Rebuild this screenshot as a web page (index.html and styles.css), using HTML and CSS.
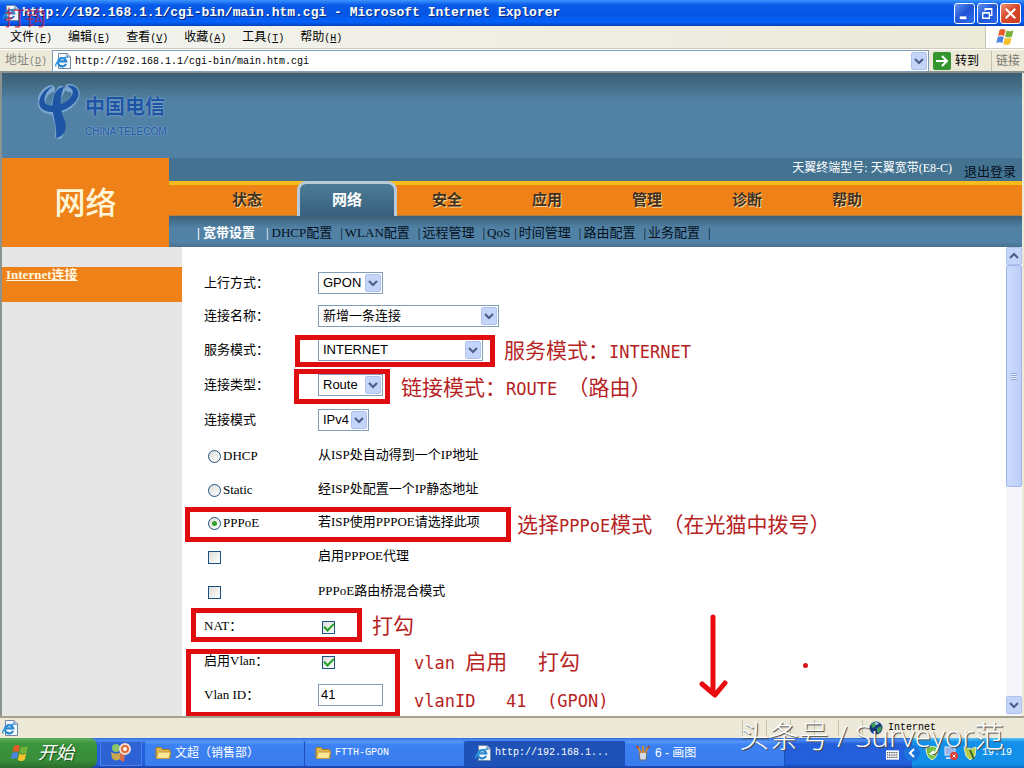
FILE: index.html
```html
<!DOCTYPE html>
<html lang="zh-CN">
<head>
<meta charset="utf-8">
<title>http://192.168.1.1/cgi-bin/main.htm.cgi - Microsoft Internet Explorer</title>
<link rel="stylesheet" href="styles.css">
</head>
<body>
<svg class="defs" aria-hidden="true">
  <symbol id="ie" viewBox="0 0 16 16">
    <path d="M3.500.5h8.500l3.500 3.500v11.500h-12z" fill="#f4f8fd" stroke="#7088a8"/>
    <path d="M12 .5v3.500h3.500" fill="#b8cbe6" stroke="#7088a8"/>
    <path d="M11 10.800A4.200 4.200 0 1 1 11.200 8.300H3" fill="none" stroke="#2a86cf" stroke-width="2.200"/>
    <path d="M1 13.500C-1 10 9 2.500 13 4.500" fill="none" stroke="#2f9be0" stroke-width="1.300"/>
  </symbol>
  <symbol id="flag" viewBox="0 0 20 18">
    <path d="M4 2C6 .5 8 1 10 2L8.500 8C6.500 7 4.500 7 2.500 8z" fill="#e65c28"/>
    <path d="M11 2.500c2 1 4.500 1 7-.5L16.500 8.500c-2.500 1.300-4.500 1.300-7 .2z" fill="#78b33a"/>
    <path d="M2.200 9C4.500 7.800 6.500 8 8.300 9L6.800 15C5 14 3 14 .8 15z" fill="#4c86e0"/>
    <path d="M9.300 9.700c2.200 1 4.500 1 7-.3L14.600 16c-2.300 1.200-4.600 1.200-6.800 0z" fill="#f4c32c"/>
  </symbol>
  <symbol id="down" viewBox="0 0 16 18">
    <rect x=".5" y=".5" width="15" height="17" rx="1.500" fill="#c5d5fa" stroke="#afc2ee"/>
    <path d="M4 7l4 4 4-4" fill="none" stroke="#4a608c" stroke-width="2.200"/>
  </symbol>
  <symbol id="folder" viewBox="0 0 16 14">
    <path d="M1 2.500q0-1 1-1h4l1.500 2H14q1 0 1 1V12H1z" fill="#e2b84a" stroke="#a87a18"/>
    <path d="M1.500 12.500L3 6h12.500L14 12.500z" fill="#fbe795" stroke="#c89a38"/>
  </symbol>
</svg>

<div class="window">
  <header class="titlebar">
    <svg class="icon16"><use href="#ie"/></svg>
    <h1>http://192.168.1.1/cgi-bin/main.htm.cgi - Microsoft Internet Explorer</h1>
    <span class="stray">打钩</span>
    <div class="winbtns">
      <button class="wb" aria-label="最小化"><svg viewBox="0 0 20 20"><path d="M5 14.500h7" stroke="#fff" stroke-width="3"/></svg></button>
      <button class="wb" aria-label="还原"><svg viewBox="0 0 20 20"><path d="M7.500 7V5h7v7H12M7 5.500h8M5 9.500h7v5.500H5zM5 9h7" fill="none" stroke="#fff" stroke-width="1.400"/></svg></button>
      <button class="wb close" aria-label="关闭"><svg viewBox="0 0 20 20"><path d="M5 5l10 10M15 5L5 15" stroke="#fff" stroke-width="2.200"/></svg></button>
    </div>
  </header>

  <nav class="menubar">
    <button>文件<span>(<u>F</u>)</span></button>
    <button>编辑<span>(<u>E</u>)</span></button>
    <button>查看<span>(<u>V</u>)</span></button>
    <button>收藏<span>(<u>A</u>)</span></button>
    <button>工具<span>(<u>T</u>)</span></button>
    <button>帮助<span>(<u>H</u>)</span></button>
    <div class="brand"><svg><use href="#flag"/></svg></div>
  </nav>

  <div class="addressbar">
    <label for="addr">地址<span>(<u>D</u>)</span></label>
    <div class="addr">
      <svg class="icon16"><use href="#ie"/></svg>
      <input id="addr" type="text" value="http://192.168.1.1/cgi-bin/main.htm.cgi">
      <svg class="drop"><use href="#down"/></svg>
    </div>
    <button class="go"><svg viewBox="0 0 18 18"><rect width="18" height="18" rx="2" fill="#35962f"/><path d="M3 9h11M9 4l5 5-5 5" fill="none" stroke="#fff" stroke-width="2"/></svg>转到</button>
    <span class="links">链接</span>
  </div>

  <main class="page">
    <div class="banner">
      <svg class="mark" viewBox="0 0 42 58" role="img" aria-label="中国电信">
        <g fill="none" stroke="#7ba6cf" stroke-width="8" stroke-linecap="round">
          <path d="M13 5C4 8 1 19 6 24c6 5 25 2 31-11 2-5-1-9-6-9"/>
          <path d="M23 6c-6 9-7 19-4 28 2 6 3 12 2 17"/>
        </g>
        <path d="M15 2C4 5-2 18 3 24c7 8 31 4 37-11 2-7-3-13-11-11 5 2 7 5 5 9C29 21 13 24 8 20 4 16 8 7 15 2z" fill="#1d54a4"/>
        <path d="M26 3c-10 0-13 16-11 26 2 9 4 17 3 25 9-2 12-10 8-19-4-10-5-21 0-32z" fill="#1d54a4"/>
      </svg>
      <div class="brandname"><b>中国电信</b><span>CHINA TELECOM</span></div>
    </div>

    <div class="head">
      <div class="section">网络</div>
      <div class="headmain">
        <div class="model"><span>天翼终端型号: 天翼宽带(E8-C)</span><a href="#">退出登录</a></div>
        <nav class="tabs">
          <a href="#">状态</a><a href="#" class="on">网络</a><a href="#">安全</a><a href="#">应用</a><a href="#">管理</a><a href="#">诊断</a><a href="#">帮助</a>
        </nav>
        <nav class="subnav">
          <span class="first">|<a href="#">宽带设置</a></span>
          <span class="second">|<a href="#">DHCP配置</a></span>
          <span>|<a href="#">WLAN配置</a></span>
          <span>|<a href="#">远程管理</a></span>
          <span>|<a href="#">QoS</a></span>
          <span class="tight">|<a href="#">时间管理</a></span>
          <span>|<a href="#">路由配置</a></span>
          <span>|<a href="#">业务配置</a></span>
          <span>|</span>
        </nav>
      </div>
    </div>

    <div class="content">
      <aside><a href="#">Internet连接</a></aside>
      <form class="form">
        <div class="row low"><label for="up">上行方式：</label><span class="sel w65"><select id="up"><option>GPON</option></select><svg><use href="#down"/></svg></span></div>
        <div class="row low"><label for="name">连接名称：</label><span class="sel w181"><select id="name"><option>新增一条连接</option></select><svg><use href="#down"/></svg></span></div>
        <div class="row"><label for="svc">服务模式：</label><span class="sel w165"><select id="svc"><option>INTERNET</option></select><svg><use href="#down"/></svg></span></div>
        <div class="row"><label for="type">连接类型：</label><span class="sel w65"><select id="type"><option>Route</option></select><svg><use href="#down"/></svg></span></div>
        <div class="row"><label for="mode">连接模式</label><span class="sel w51"><select id="mode"><option>IPv4</option></select><svg><use href="#down"/></svg></span></div>
        <div class="row"><label class="pick"><input type="radio" name="ip">DHCP</label><span>从ISP处自动得到一个IP地址</span></div>
        <div class="row low"><label class="pick"><input type="radio" name="ip">Static</label><span>经ISP处配置一个IP静态地址</span></div>
        <div class="row low"><label class="pick"><input type="radio" name="ip" checked>PPPoE</label><span>若ISP使用PPPOE请选择此项</span></div>
        <div class="row"><span class="pick"><input type="checkbox" id="proxy"></span><label for="proxy">启用PPPOE代理</label></div>
        <div class="row"><span class="pick"><input type="checkbox" id="mix"></span><label for="mix">PPPoE路由桥混合模式</label></div>
        <div class="row"><label for="nat">NAT：</label><span class="pick"><input type="checkbox" id="nat" checked></span></div>
        <div class="row"><label for="vlan">启用Vlan：</label><span class="pick"><input type="checkbox" id="vlan" checked></span></div>
        <div class="row low"><label for="vid">Vlan ID：</label><input class="text" id="vid" type="text" value="41"></div>
      </form>
      <div class="scroll" aria-hidden="true">
        <svg class="up"><use href="#down"/></svg>
        <div class="thumb"><i></i></div>
        <svg><use href="#down"/></svg>
      </div>
    </div>

    <div class="notes">
      <i class="box b1"></i><i class="box b2"></i><i class="box b3"></i><i class="box b4"></i><i class="box b5"></i>
      <p class="n1">服务模式：<span>INTERNET</span></p>
      <p class="n2">链接模式：<span>ROUTE </span>（路由）</p>
      <p class="n3">选择<span>PPPoE</span>模式<span> </span>（在光猫中拨号）</p>
      <p class="n4">打勾</p>
      <p class="n5"><span>vlan </span>启用<span>   </span>打勾</p>
      <p class="n6"><span>vlanID   41  (GPON)</span></p>
      <svg class="arrow" viewBox="0 0 30 86"><path d="M14 3v76M3 70l13 11 10-12" fill="none" stroke="#e80c10" stroke-width="5" stroke-linecap="round" stroke-linejoin="round"/></svg>
      <i class="dot"></i>
    </div>
  </main>

  <footer class="status">
    <svg class="icon16"><use href="#ie"/></svg>
    <div class="cells"><i></i><i></i><i></i><i></i><i></i></div>
    <div class="zone">
      <svg viewBox="0 0 14 14"><circle cx="7" cy="7" r="6.500" fill="#16387c"/><path d="M2 3l4-2 2 2-2 3-3 1zM8 7l4-2 1 3-3 4-2-1z" fill="#3f9a5a"/><path d="M5 2l3-1 2 2-3 1z" fill="#a8d8ee"/></svg>
      Internet
    </div>
  </footer>

  <div class="taskbar">
    <button class="start"><svg><use href="#flag"/></svg>开始</button>
    <button class="quick" aria-label="快速启动"><svg viewBox="0 0 24 20"><circle cx="7" cy="5" r="4" fill="#8cc46c"/><path d="M2 9q5 3 10 0v6q-5 5-9 0z" fill="#c8a84c"/><path d="M11 10l5 1-1 8-4-2z" fill="#d86a50"/><circle cx="16" cy="6" r="5" fill="#e06c3c" stroke="#f6ded4" stroke-width="2"/><circle cx="16" cy="6" r="2" fill="#fff"/></svg></button>
    <button class="task"><svg><use href="#folder"/></svg>文超（销售部）</button>
    <button class="task latin"><svg><use href="#folder"/></svg>FTTH-GPON</button>
    <button class="task latin on"><svg><use href="#ie"/></svg>http://192.168.1...</button>
    <button class="task"><svg viewBox="0 0 16 16"><path d="M4 7h8l-1 8H5z" fill="#d8dce8" stroke="#6c6870"/><path d="M6 8L3 2M8 8V1M10 8l3-6" stroke="#c88c3c" stroke-width="2"/><path d="M3 3L2 1M13 3l1-2" stroke="#b43c2c" stroke-width="2"/></svg>6 - 画图</button>
    <svg class="kbd" viewBox="0 0 14 10"><rect width="14" height="10" fill="#fff"/><path d="M1 2.500h12M1 5h12M1 7.500h12" stroke="#222" stroke-dasharray="1.500 .8"/></svg>
    <div class="tray">
      <svg class="chev" viewBox="0 0 16 16"><circle cx="8" cy="8" r="8" fill="#1a74dc"/><path d="M10 4L6 8l4 4" fill="none" stroke="#fff" stroke-width="2"/></svg>
      <svg viewBox="0 0 14 14"><path d="M1 2l6-2 6 2q0 9-6 12-6-3-6-12z" fill="#7cc242" stroke="#e8f4c8"/><path d="M4 8l5-4v6z" fill="#fff"/></svg>
      <svg viewBox="0 0 14 14"><rect x="1" y="1" width="10" height="8" fill="#9cb4e4" stroke="#e0e8f8"/><path d="M2 12h8" stroke="#ccd8f0" stroke-width="2"/><circle cx="10" cy="10" r="4" fill="#dc3c34"/><path d="M8.500 8.500l3 3M11.500 8.500l-3 3" stroke="#fff"/></svg>
      <svg viewBox="0 0 14 14"><path d="M1 1l7 2 5-2-1 9-5 4-4-4z" fill="#b8cc4c" stroke="#e8ecb0"/><path d="M7 4l4 9" stroke="#3a6c2c" stroke-width="2"/></svg>
      <time>19:19</time>
    </div>
  </div>
  <div class="watermark">头条号 / Surveyor范</div>
</div>
</body>
</html>
```

FILE: styles.css
```css
* { box-sizing: border-box; }
body {
  margin: 0;
  font-family: "Liberation Serif", "Noto Sans CJK SC", serif;
  font-size: 13px;
  line-height: 16px;
  color: #000;
}
button, input, select { font: inherit; color: inherit; margin: 0; }
button { border: 0; background: none; padding: 0; }
p { margin: 0; }
i { display: block; }
svg { display: block; flex: none; }
.defs { position: absolute; width: 0; height: 0; }
.icon16 { width: 16px; height: 16px; }

.window {
  position: relative;
  display: flex;
  flex-direction: column;
  height: 100vh;
  overflow: hidden;
}

.titlebar {
  position: relative;
  flex: none;
  height: 26px;
  display: flex;
  align-items: center;
  gap: 3px;
  padding: 0 3px;
  background: linear-gradient(#3a95ff 0, #0a5be8 5px, #0455e4 14px, #0562fb 22px, #0341b8 100%);
}
.titlebar h1 {
  flex: 1;
  margin: 0;
  font: bold 13px/20px "Liberation Mono", monospace;
  color: #fff;
  text-shadow: 1px 1px #0a2a78;
  white-space: nowrap;
}
.stray {
  position: absolute;
  left: 4px;
  top: 4px;
  font: 21px/24px "Noto Sans CJK SC", sans-serif;
  color: #d01838;
  opacity: .7;
}
.winbtns { display: flex; gap: 2px; }
.wb {
  width: 21px;
  height: 21px;
  border: 1px solid #fff;
  border-radius: 3px;
  background: linear-gradient(135deg, #5f90f4, #2054d4 50%, #2c6cf0);
}
.wb.close { background: linear-gradient(135deg, #ee8e70, #d6452a 50%, #c84020); }

.menubar, .addressbar, .task, .start { font: 12px/16px "Liberation Sans", "Noto Sans CJK SC", sans-serif; }
.menubar span, .addressbar label span, .addr input { font: 10px/16px "Liberation Mono", monospace; }
.menubar {
  flex: none;
  display: flex;
  height: 23px;
  padding-left: 2px;
  background: linear-gradient(90deg, #f3f4f1, #ece9d8);
  border-bottom: 1px solid #cfccbc;
}
.menubar button { padding: 2px 8px 0; }
.brand {
  margin-left: auto;
  width: 39px;
  display: grid;
  place-items: center;
  background: #fff;
  border-left: 1px solid #c8c5b2;
}
.brand svg { width: 21px; height: 18px; }

.addressbar {
  flex: none;
  height: 24px;
  display: flex;
  align-items: center;
  background: #ece9d8;
  border-top: 1px solid #fff;
  border-bottom: 2px solid #8c9490;
}
.addressbar label { width: 52px; padding-left: 5px; color: #85857c; }
.addr {
  flex: 1;
  height: 22px;
  display: flex;
  align-items: center;
  gap: 4px;
  padding: 0 1px 0 2px;
  background: #fff;
  border: 1px solid #7f9db9;
}
.addr input { flex: 1; border: 0; padding: 2px 0 0; outline: 0; background: none; }
.drop { width: 16px; height: 18px; }
.go { display: flex; align-items: center; gap: 4px; padding: 0 12px 0 4px; }
.go svg { width: 18px; height: 18px; }
.links { padding: 2px 4px; border-left: 1px solid #c4c1ae; color: #77776e; }

.page {
  position: relative;
  flex: 1;
  min-height: 0;
  display: flex;
  flex-direction: column;
  overflow: hidden;
  border: solid #ece9d8;
  border-width: 0 2px 0 0;
  border-left: 2px solid #8a938f;
  background: #fff;
}
.banner {
  flex: none;
  height: 85px;
  display: flex;
  gap: 5px;
  padding: 11px 0 0 36px;
  background: linear-gradient(#3b5f75 0, #40687f 8px, #5182a6 28px, #5182a6 100%);
}
.mark { width: 42px; height: 58px; }
.brandname { display: flex; flex-direction: column; gap: 1px; padding-top: 3px; color: #1d54a4; text-shadow: 0 0 2px #a4c6e6; }
.brandname b { font: bold 20px/38px "Noto Sans CJK SC", sans-serif; }
.brandname span { font: 10px/12px "Liberation Sans", sans-serif; }

.head { flex: none; display: flex; }
.section {
  width: 167px;
  display: grid;
  place-items: center;
  padding-bottom: 4px;
  background: #ee8219;
  color: #fff6d8;
  font: 500 31px/40px "Noto Sans CJK SC", sans-serif;
}
.headmain { flex: 1; min-width: 0; }
.model {
  height: 23px;
  display: flex;
  justify-content: flex-end;
  gap: 12px;
  padding-right: 6px;
  line-height: 20px;
  color: #fff;
  background: #437391;
  white-space: nowrap;
}
.model span { font-size: 12px; }
.model a { color: #06101c; text-decoration: none; line-height: 28px; }
.tabs {
  height: 35px;
  display: flex;
  padding-left: 28px;
  background: #ee8219;
  border-top: 4px solid #f6bc1c;
  border-bottom: 1px solid #b08040;
}
.tabs a {
  width: 100px;
  text-align: center;
  text-decoration: none;
  font: bold 15px/28px "Noto Sans CJK SC", sans-serif;
  color: #40301c;
  text-shadow: 1px 1px #f8d8a0;
}
.tabs .on {
  margin: -4px 0 -1px;
  padding-top: 1px;
  color: #fff;
  text-shadow: none;
  background: linear-gradient(#4c7c98, #38607c);
  border: 3px solid #b9cbd6;
  border-bottom: 0;
  border-radius: 9px 9px 0 0;
}
.subnav {
  height: 31px;
  display: flex;
  gap: 8px;
  padding: 0 28px;
  line-height: 34px;
  background: linear-gradient(#3c6078, #5182a6 12px, #5182a6 26px, #47718c);
  white-space: nowrap;
  color: #04101c;
}
.subnav a { color: #04101c; text-decoration: none; margin-left: 2px; }
.subnav .first, .subnav .first a { color: #fff; font-weight: bold; }
.subnav .first a { margin: 0 3px; }
.subnav .second { color: #fff; }
.subnav .second a { margin-left: 3px; }
.subnav .tight { margin-left: -4px; }

.content { flex: 1; min-height: 0; display: flex; }
aside { flex: none; width: 180px; background: #e6e6e6; padding-top: 20px; }
aside a {
  display: block;
  height: 35px;
  padding-left: 4px;
  background: #ee8219;
  color: #fff6e0;
  font-weight: bold;
}
.form { flex: 1; padding: 19px 0 0 22px; }
.row {
  display: grid;
  grid-template-columns: 114px 1fr;
  align-items: center;
  height: 35px;
}
.row.low { height: 33px; }
.sel { display: grid; height: 22px; align-items: center; }
.sel select, .sel svg { grid-area: 1 / 1; }
.sel select {
  width: 100%;
  height: 22px;
  appearance: none;
  border: 1px solid #7f9db9;
  border-radius: 0;
  background: #fff;
  padding: 0 4px;
  font: 13px/18px "Liberation Sans", "Noto Sans CJK SC", sans-serif;
}
.sel svg { width: 16px; height: 18px; justify-self: end; margin-right: 2px; pointer-events: none; }
.w51 { width: 51px; }
.w65 { width: 65px; }
.w165 { width: 165px; }
.w181 { width: 181px; }
.pick { display: flex; align-items: center; gap: 2px; padding: 3px 0 0 4px; }
.pick input {
  appearance: none;
  width: 13px;
  height: 13px;
  display: grid;
  place-items: center;
  border: 1px solid #1c5180;
  background: linear-gradient(135deg, #dcdcd7, #fff);
}
.pick input[type="radio"] { border-radius: 50%; }
.pick input[type="radio"]:checked::before {
  content: "";
  width: 5px;
  height: 5px;
  border-radius: 50%;
  background: #2aa329;
}
.pick input[type="checkbox"]:checked::before {
  content: "";
  width: 8px;
  height: 4px;
  margin-bottom: 2px;
  border: solid #21a121;
  border-width: 0 0 2px 2px;
  transform: rotate(-45deg);
}
.text {
  width: 65px;
  height: 22px;
  border: 1px solid #7f9db9;
  padding: 0 2px;
  font: 13px/18px "Liberation Sans", sans-serif;
}
.scroll {
  width: 16px;
  display: flex;
  flex-direction: column;
  padding-bottom: 2px;
  background: #f5f5fa;
}
.scroll svg { width: 16px; height: 18px; margin-top: auto; }
.scroll .up { margin: 0; transform: rotate(180deg); }
.thumb {
  height: 222px;
  display: grid;
  place-items: center;
  border: 1px solid #a3b8ea;
  border-radius: 2px;
  background: linear-gradient(90deg, #cddcfd, #bccdf8);
}
.thumb i { width: 6px; height: 7px; background: repeating-linear-gradient(#8ea7dc 0 1px, #e6eefe 1px 2px); }

/* Hand-drawn remarks over the form */
.notes { position: absolute; top: 0; left: -2px; pointer-events: none; }
.notes > * { position: absolute; }
.notes p {
  white-space: pre;
  color: #b6231f;
  font: 21px/28px "Noto Sans CJK SC", sans-serif;
}
.notes p span { font: 17px/28px "DejaVu Sans Mono", monospace; }
.box { border: 5px solid #e00d10; }
.b1 { left: 295px; top: 262px; width: 200px; height: 32px; }
.b2 { left: 294px; top: 296px; width: 96px; height: 35px; }
.b3 { left: 185px; top: 434px; width: 326px; height: 35px; }
.b4 { left: 191px; top: 535px; width: 171px; height: 34px; }
.b5 { left: 186px; top: 576px; width: 214px; height: 68px; }
.n1 { left: 504px; top: 262px; }
.n2 { left: 401px; top: 299px; }
.n3 { left: 517px; top: 436px; }
.n4 { left: 372px; top: 537px; }
.n5 { left: 414px; top: 573px; }
.n6 { left: 414px; top: 611px; }
.arrow { left: 699px; top: 541px; width: 30px; height: 86px; }
.dot { left: 803px; top: 590px; width: 5px; height: 5px; border-radius: 50%; background: #d81418; }

.status {
  flex: none;
  height: 22px;
  display: flex;
  align-items: center;
  padding: 0 2px;
  background: #ece9d8;
  border-top: 2px solid #a5a28e;
}
.cells { margin-left: auto; display: flex; }
.cells i { width: 24px; height: 16px; border-left: 1px solid #c4c1ae; }
.zone {
  width: 160px;
  display: flex;
  align-items: center;
  gap: 5px;
  padding-left: 6px;
  border-left: 1px solid #c4c1ae;
  font: 10px/16px "Liberation Mono", monospace;
}
.zone svg { width: 14px; height: 14px; }

.taskbar {
  flex: none;
  height: 30px;
  display: flex;
  align-items: center;
  background: linear-gradient(#3168d5 0, #4a8cf4 2px, #245edb 6px, #2360dc 26px, #1941a5);
}
.start {
  width: 97px;
  height: 30px;
  display: flex;
  align-items: center;
  gap: 8px;
  padding-left: 10px;
  border-radius: 0 8px 8px 0;
  background: linear-gradient(#5cac5c, #3a953c 6px, #388e3a 22px, #2a6c2c);
  color: #fff;
  font-size: 18px;
  font-style: italic;
  text-shadow: 1px 1px 1px #1c4c1c;
}
.start svg { width: 20px; height: 18px; }
.quick { width: 42px; height: 25px; margin: 0 3px; display: grid; place-items: center; border: 1px solid #4a80ec; background: #2c62d4; }
.quick svg { width: 24px; height: 20px; }
.task {
  flex: 0 1 160px;
  height: 25px;
  display: flex;
  align-items: center;
  gap: 4px;
  padding-left: 10px;
  color: #fff;
  background: linear-gradient(#5c9cff, #3c81f3 4px, #3a7cec);
  border-right: 1px solid #1d4fb8;
  border-radius: 2px;
  white-space: nowrap;
}
.task svg { width: 16px; height: 16px; }
.task.latin { font: 10px/16px "Liberation Mono", monospace; }
.task.on { background: #1e52b7; }
.kbd { width: 13px; height: 10px; margin: 3px 13px 0 auto; }
.tray {
  width: 112px;
  height: 30px;
  display: flex;
  align-items: center;
  gap: 5px;
  color: #fff;
  background: linear-gradient(#58c4f8, #1390ea 4px, #1290e8 26px, #0c6cc0);
  font: 10px/16px "Liberation Mono", monospace;
}
.tray svg { width: 14px; height: 14px; }
.tray .chev { width: 16px; height: 16px; margin-left: -8px; }
.tray time { font-size: 10px; }
.watermark {
  position: absolute;
  right: 20px;
  bottom: 14px;
  font: 30px/36px "Open Sans", "Noto Sans CJK SC", sans-serif;
  font-weight: 300;
  color: #fff;
  text-shadow: 1px 1px 1px #444;
  white-space: nowrap;
  pointer-events: none;
}
```
